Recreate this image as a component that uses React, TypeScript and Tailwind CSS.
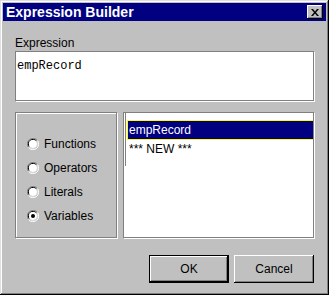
const font = { fontFamily: '"Liberation Sans", Arial, sans-serif' };

function Radio({ checked }: { checked: boolean }) {
    return (
        <svg width="12" height="12" viewBox="0 0 12 12" className="shrink-0">
            <path d="M10.5 2.5 A5.5 5.5 0 0 0 1.5 9.5" fill="none" stroke="#808080" strokeWidth="1" />
            <path d="M9.5 3.2 A4.4 4.4 0 0 0 2.3 8.7" fill="none" stroke="#000" strokeWidth="1" />
            <circle cx="6" cy="6" r="4" fill="#fff" />
            <path d="M1.5 9.5 A5.5 5.5 0 0 0 10.5 2.5" fill="none" stroke="#fff" strokeWidth="1" />
            <path d="M2.3 8.7 A4.4 4.4 0 0 0 9.5 3.2" fill="none" stroke="#dfdfdf" strokeWidth="1" />
            {checked && <circle cx="6" cy="6" r="2" fill="#000" />}
        </svg>
    );
}

const options = [
    { label: "Functions", checked: false },
    { label: "Operators", checked: false },
    { label: "Literals", checked: false },
    { label: "Variables", checked: true },
];

export default function App() {
    return (
        <div
            style={font}
            className="w-[329px] h-[295px] bg-[#c0c0c0] p-[3px] flex flex-col text-[12px] text-black shadow-[inset_-1px_-1px_#000,inset_1px_1px_#dfdfdf,inset_-2px_-2px_#808080,inset_2px_2px_#fff]"
        >
            {/* title bar */}
            <div className="h-[18px] bg-[#000080] flex items-center justify-between pl-[3px] pr-[3px]">
                <span className="text-white font-bold text-[14px] leading-[18px]">Expression Builder</span>
                <div className="w-[16px] h-[14px] bg-[#c0c0c0] flex items-center justify-center shadow-[inset_-1px_-1px_#000,inset_1px_1px_#fff,inset_-2px_-2px_#808080]">
                    <svg width="8" height="7" viewBox="0 0 8 7">
                        <path d="M0 0 L2 0 L4 2.5 L6 0 L8 0 L5 3.5 L8 7 L6 7 L4 4.5 L2 7 L0 7 L3 3.5 Z" fill="#000" />
                    </svg>
                </div>
            </div>

            {/* expression */}
            <div className="flex flex-col px-[12px] pt-[15px]">
                <span className="leading-[14px]">Expression</span>
                <div className="mt-[1px] h-[50px] bg-white border border-[#808080] shadow-[1px_1px_#fff] px-[1px] pt-[4px]">
                    <span className="text-[12px] leading-[14px]" style={{ fontFamily: '"Liberation Mono", "Courier New", monospace' }}>
                        empRecord
                    </span>
                </div>
            </div>

            {/* options and list */}
            <div className="flex gap-[6px] pl-[12px] pr-[12px] mt-[11px] h-[126px]">
                <div className="w-[102px] border border-[#808080] shadow-[inset_1px_1px_#fff,1px_1px_#fff] flex flex-col pt-[19px] pl-[11px]">
                    {options.map((o) => (
                        <div key={o.label} className="h-[24px] flex items-center gap-[5px]">
                            <Radio checked={o.checked} />
                            <span className="leading-[14px]">{o.label}</span>
                        </div>
                    ))}
                </div>
                <div className="flex-1 bg-white border border-[#808080] shadow-[1px_1px_#fff] overflow-hidden flex pl-[1px]">
                    <div className="w-[1px] h-[53px] bg-[#808080] mt-0 shrink-0" />
                    <div className="flex flex-col pt-[7px] pl-[1px]">
                        <div className="w-[200px] h-[20px] bg-[#000080] border border-[#ffff00] text-white flex items-center pl-[1px] leading-[14px]">
                            empRecord
                        </div>
                        <div className="h-[18px] flex items-center pl-[2px] leading-[14px]">*** NEW ***</div>
                    </div>
                </div>
            </div>

            {/* buttons */}
            <div className="flex justify-end gap-[5px] pr-[12px] mt-[17px]">
                <button className="w-[80px] h-[28px] bg-[#c0c0c0] border border-black shadow-[inset_-1px_-1px_#000,inset_1px_1px_#fff,inset_-2px_-2px_#808080] flex items-center justify-center leading-[14px]">
                    OK
                </button>
                <button className="w-[80px] h-[28px] bg-[#c0c0c0] shadow-[inset_-1px_-1px_#000,inset_1px_1px_#fff,inset_-2px_-2px_#808080] flex items-center justify-center leading-[14px]">
                    Cancel
                </button>
            </div>
        </div>
    );
}
